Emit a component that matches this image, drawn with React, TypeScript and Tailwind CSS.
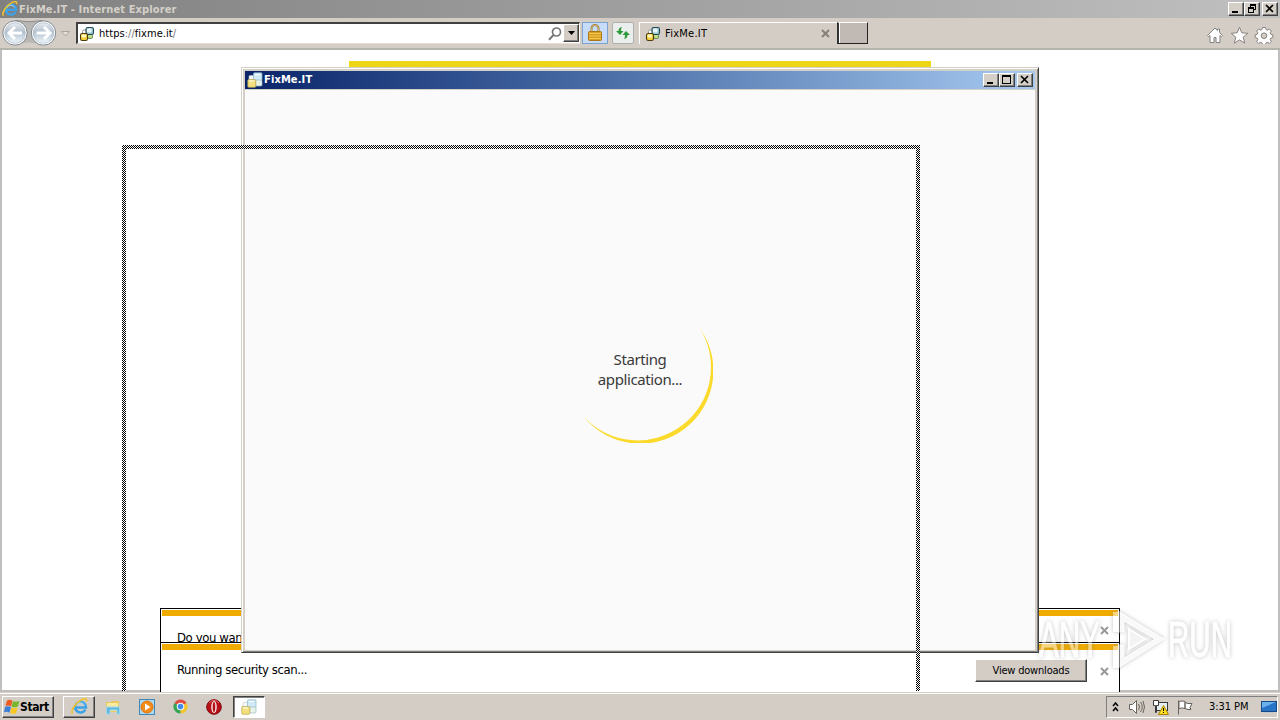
import type { ReactNode } from 'react';
import clsx from 'clsx';

type IconProps = { className?: string };

const raised =
  'border border-t-white border-l-white border-r-[#404040] border-b-[#404040] shadow-[inset_-1px_-1px_0_#808080]';

function IeIcon({ className }: IconProps) {
  return (
    <svg viewBox="0 0 16 16" className={className} fill="none">
      <path d="M13.600 11A5.200 5 0 1 1 14.200 8.900H5" stroke="#3ba3e8" strokeWidth="2.200" />
      <path d="M12.800 6.500A4.600 4.600 0 0 0 4.800 6.800" stroke="#a4defa" strokeWidth=".8" />
      <path d="M1.500 14.800C-.9 12.400 4.400 4.200 10.300 1.400c3.600-1.700 5-.5 4.200 1.900" stroke="#f0c22c" strokeWidth="1.500" />
    </svg>
  );
}

function FixMeIcon({ className }: IconProps) {
  return (
    <svg viewBox="0 0 16 16" className={className}>
      <rect x="3.500" y="4" width="5" height="5" rx="1.500" fill="#fff" stroke="#8f9896" />
      <rect x="8.500" y="8" width="5" height="4.500" rx="1.500" fill="#c4e08c" stroke="#6d8f5c" />
      <rect x="7" y="1.500" width="7.500" height="7" rx="1.800" fill="#9bc7d2" stroke="#1f4854" strokeWidth="1.100" />
      <rect x="8" y="2.500" width="4.500" height="4" rx="1" fill="#eaf6f7" />
      <rect x="1.500" y="7.500" width="7" height="7" rx="1.800" fill="#f5d13c" stroke="#4c3d10" strokeWidth="1.100" />
      <rect x="2.500" y="8.500" width="4.500" height="3" rx="1" fill="#fff6c0" />
    </svg>
  );
}

function FixMePaleIcon({ className }: IconProps) {
  return (
    <svg viewBox="0 0 16 16" className={className}>
      <rect x="2" y="3.500" width="6" height="5.500" rx="1" fill="#f7faf8" stroke="#b9c6c9" strokeWidth=".6" />
      <rect x="6.500" y=".8" width="8.500" height="8" rx="1" fill="#cfe9f6" stroke="#86b4c8" strokeWidth=".7" />
      <rect x="8.500" y="8" width="6.500" height="6" rx="1" fill="#e6f3ea" stroke="#96bac0" strokeWidth=".7" />
      <rect x=".8" y="7.500" width="8" height="7.800" rx="1" fill="#f3df7c" stroke="#b9a552" strokeWidth=".7" />
      <path d="M2 9h5M8 2.500h5" stroke="#fff" />
    </svg>
  );
}

function WindowsIcon({ className }: IconProps) {
  return (
    <svg viewBox="0 0 16 16" className={className}>
      <path d="M3 1.500c2-1.100 3.800-.8 5.400.2L7.200 7.300C5.500 6.200 3.500 6.200 1.500 7z" fill="#ed5a24" />
      <path d="M9 2c2 1 4.300.9 6.500-.2l-1.600 5.800c-1.900 1-4.200 1-6.200.1z" fill="#76b82a" />
      <path d="M1.200 7.800c2-1 4.200-.8 5.800.2l-1.500 5.700c-1.700-1.100-3.600-1.100-5.600-.3z" fill="#3b7fd6" />
      <path d="M7.600 8.500c2 1 4.100.9 6.100.1l-1.600 5.600c-1.800.9-4 .9-6-.1z" fill="#f9c922" />
    </svg>
  );
}

function CloseGlyph({ className }: IconProps) {
  return (
    <svg viewBox="0 0 9 9" className={clsx('h-[9px] w-[9px] shrink-0', className)} fill="none" stroke="currentColor" strokeWidth="2">
      <path d="M1 1l7 7M8 1L1 8" />
    </svg>
  );
}

function CaptionButton({ children }: { children: ReactNode }) {
  return (
    <div className={clsx('flex h-[14px] w-4 items-center justify-center bg-[#d4d0c8]', raised)}>
      <svg viewBox="0 0 12 10" className="h-[10px] w-3" fill="none" stroke="#000" shapeRendering="crispEdges">
        {children}
      </svg>
    </div>
  );
}

function CaptionButtons({ restored = false }: { restored?: boolean }) {
  return (
    <div className="flex">
      <CaptionButton>
        <path d="M2 8h6" strokeWidth="2" />
      </CaptionButton>
      <CaptionButton>
        {restored ? (
          <>
            <path d="M4.500 3V.500h5v5H8" />
            <path d="M4 1h6M2 4h6" strokeWidth="2" />
            <path d="M2.500 4v4.500h5V4" />
          </>
        ) : (
          <>
            <path d="M1.500 1v7.500h8V1" />
            <path d="M1 1h9" strokeWidth="2" />
          </>
        )}
      </CaptionButton>
      <div className="w-0.5" />
      <CaptionButton>
        <path d="M2 1l7 7M9 1L2 8" strokeWidth="1.700" shapeRendering="auto" />
      </CaptionButton>
    </div>
  );
}

function NavButtons() {
  return (
    <svg viewBox="0 0 74 30" className="h-[30px] w-[74px]">
      <defs>
        <linearGradient id="nav" x1="0" y1="0" x2="0" y2="1">
          <stop offset="0" stopColor="#e9edf2" />
          <stop offset=".45" stopColor="#b3c1d0" />
          <stop offset="1" stopColor="#edf7fc" />
        </linearGradient>
      </defs>
      <path d="M14 2.500Q29 5 44 2.500V27Q29 22 14 27z" fill="#b9b7b4" />
      <path d="M15 2.500Q29 5 43 2.500" stroke="#8b8b8b" fill="none" />
      {[15, 43.5].map((cx) => (
        <g key={cx}>
          <circle cx={cx} cy="15" r="12.200" fill="#fff" stroke="#7e8790" />
          <circle cx={cx} cy="15" r="10.300" fill="url(#nav)" stroke="#a8b5c2" strokeWidth=".7" />
        </g>
      ))}
      <g fill="none" stroke="#fff" strokeWidth="3">
        <path d="M22 15H9M15 9l-6 6 6 6M36.500 15h13M44 9l6 6-6 6" />
      </g>
      <path d="M61.500 13.500h8l-4 4.500z" fill="#e3dfd8" stroke="#aaa69f" />
    </svg>
  );
}

function ToolIcons() {
  return (
    <svg viewBox="0 0 68 18" className="h-[18px] w-[68px]" fill="#fff" stroke="#85827e" strokeWidth="1">
      <path d="M1.500 9.500L9 2l2.500 2.500V3h2v3.500l3 3-1 1-1.500-1v7h-4v-5H8v5H4v-7l-1.500 1z" />
      <path d="M33.500 1.200l2.300 5.600 6 .5-4.600 3.900 1.500 5.900-5.200-3.200-5.200 3.200 1.500-5.900-4.600-3.900 6-.5z" />
      <path d="M56.500 1.500h3l.5 2 1.500.6 1.800-1.100 2 2-1.100 1.800.6 1.500 2 .5v2.800l-2 .5-.6 1.500 1.100 1.800-2 2-1.800-1.100-1.500.6-.5 2h-3l-.5-2-1.500-.6-1.800 1.100-2-2 1.100-1.800-.6-1.500-2-.5V8.800l2-.5.6-1.500-1.100-1.800 2-2 1.800 1.100 1.500-.6z" />
      <circle cx="58" cy="9.700" r="2.800" fill="#d4cdc6" />
    </svg>
  );
}

function BrowserBar() {
  return (
    <div className="flex h-8 shrink-0 items-start border-b-2 border-[#b5b4ac] bg-[#d4cdc6]">
      <NavButtons />
      <div className="mt-[4px] ml-0.5 flex h-[22px] w-[504px] items-center border border-t-2 border-l-2 border-t-[#404040] border-l-[#404040] border-r-white border-b-[#e6ded5] bg-white pl-px">
        <FixMeIcon className="h-4 w-4" />
        <span className="mt-px ml-1 text-[11px] leading-4 tracking-[0.04px] whitespace-nowrap">
          https<span className="text-[#777]">://</span>fixme.it<span className="text-[#777]">/</span>
        </span>
        <svg viewBox="0 0 14 14" className="ml-auto h-[14px] w-[14px]" fill="none" stroke="#777">
          <circle cx="8.500" cy="5" r="4" strokeWidth="1.700" />
          <path d="M5.500 8L1 12.700" strokeWidth="2" />
        </svg>
        <div className={clsx('-mt-px ml-px flex h-[18px] w-4 items-center justify-center bg-[#d4cdc6]', raised)}>
          <svg viewBox="0 0 7 4" className="h-1 w-[7px]"><path d="M0 0h7L3.500 4z" /></svg>
        </div>
      </div>
      <div className="mt-[4px] ml-0.5 flex h-[22px] w-[26px] items-center justify-center border border-[#7da2ce] bg-[#c6dcf8]">
        <svg viewBox="0 0 14 18" className="h-[18px] w-[14px]">
          <path d="M3.500 8V4.500a3.500 3.500 0 0 1 7 0V8" fill="none" stroke="#9a7632" strokeWidth="2" />
          <path d="M3.500 8V4.500a3.500 3.500 0 0 1 7 0V8" fill="none" stroke="#ead18b" strokeWidth=".7" />
          <rect x=".5" y="7.500" width="13" height="9" rx="1" fill="#d99f24" stroke="#a87817" />
          <path d="M1 9.500h12M1 12h12M1 14.500h12" stroke="#f4c851" />
        </svg>
      </div>
      <div className="mt-[4px] ml-1 flex h-[22px] w-[22px] items-center justify-center rounded-[2px] border border-[#aeb0ae] bg-[#eaeeec]">
        <svg viewBox="0 0 16 16" className="h-4 w-4" fill="#2f9a39">
          <path d="M7 2C4.500 2.300 3.500 4 3.500 6H1l4 4 3.500-4H6c0-2 .3-3 1-4z" />
          <path d="M9 14c2.500-.3 3.500-2 3.500-4H15l-4-4-3.500 4H10c0 2-.3 3-1 4z" />
        </svg>
      </div>
      <div className="mt-[4px] ml-[5px] flex h-[22px] w-[198px] items-center border-t border-l border-white pr-[7px] pl-[5px]">
        <FixMeIcon className="h-4 w-4" />
        <span className="mt-px ml-1 text-[11px] leading-4 tracking-[0.25px]">FixMe.IT</span>
        <CloseGlyph className="ml-auto text-[#858078]" />
      </div>
      <div className="mt-[4px] h-[22px] w-[31px] border-t border-r border-b border-l-2 border-t-white border-r-[#222] border-b-[#222] border-l-[#333] bg-[#c1b9b4] shadow-[inset_1px_0_0_#fff]" />
      <div className="mt-[8px] mr-[6px] ml-auto">
        <ToolIcons />
      </div>
    </div>
  );
}

function Notification({ children, action, className }: { children: ReactNode; action?: ReactNode; className?: string }) {
  return (
    <div className={clsx('border border-b-0 border-black bg-white px-px pt-px', className)}>
      <div className="h-[6px] bg-[#f0ab00]" />
      <div className="flex items-start">
        {children}
        {action}
      </div>
    </div>
  );
}

function Checker({ className }: IconProps) {
  return (
    <div className={clsx('bg-[repeating-conic-gradient(#000_0_25%,#fff_0_50%)] bg-[length:2px_2px]', className)} />
  );
}

// Outline drawn by the system while a window is being moved
function DragOutline() {
  return (
    <div className="absolute top-[145px] left-[122px] flex h-[546px] w-[798px] flex-col">
      <Checker className="h-1 shrink-0" />
      <div className="flex flex-1 justify-between">
        <Checker className="w-1" />
        <Checker className="w-1" />
      </div>
    </div>
  );
}

function AppWindow() {
  return (
    <div className="absolute top-[67px] left-[241px] flex h-[586px] w-[798px] flex-col border border-t-[#d4d0c8] border-r-[#404040] border-b-[#404040] border-l-[#d4d0c8] bg-[#d4d0c8] p-[3px] pb-[2px] shadow-[inset_1px_1px_0_#fff,inset_-1px_-1px_0_#808080]">
      <div className="flex h-[18px] shrink-0 items-center bg-linear-to-r from-[#0a246a] to-[#a6caf0] pr-0.5 pl-0.5 text-white">
        <FixMePaleIcon className="h-4 w-4" />
        <span className="ml-px text-[11px] leading-4 font-bold tracking-[0.12px]">FixMe.IT</span>
        <div className="ml-auto">
          <CaptionButtons />
        </div>
      </div>
      <div className="mt-px flex flex-1 items-center justify-center bg-[#fafafa]">
        <div className="relative flex h-[146px] w-[146px] items-center justify-center">
          <svg viewBox="0 0 146 146" className="absolute inset-0 h-full w-full">
            <path
              d="M133 31.500A73 73 0 0 1 17 120A73.300 73.300 0 0 0 133 31.500Z"
              fill="#fbda2b"
            />
          </svg>
          <p className="relative -top-px text-center font-['Noto_Sans',sans-serif] text-[15px] leading-5 tracking-[-0.4px] text-[#393939]">
            Starting
            <br />
            application...
          </p>
        </div>
      </div>
    </div>
  );
}

function Watermark() {
  return (
    <svg
      viewBox="0 0 220 66"
      className="absolute top-[606px] left-[1036px] h-[66px] w-[220px] overflow-visible font-['Liberation_Sans_Narrow','Liberation_Sans',sans-serif] opacity-50 drop-shadow-[0_0_2px_#888]"
      fill="#fff"
      stroke="#fff"
      fontSize="50"
    >
      <text x="3" y="51" textLength="61" lengthAdjust="spacingAndGlyphs">ANY</text>
      <text x="132" y="51" textLength="64" lengthAdjust="spacingAndGlyphs">RUN</text>
      <path d="M77 6h5v20h-5zM77 40h5v22h-5z" stroke="none" />
      <path d="M82 5l46 28-46 29V39h6v13l31-19-31-18v11h-6z" fill="#f4f4f4" strokeWidth="1" />
      <path d="M93 23l16 10-16 10z" fill="#e8e8e8" strokeWidth="2" />
    </svg>
  );
}

function TaskButton({ children }: { children: ReactNode }) {
  return <div className="flex w-[33.800px] justify-center">{children}</div>;
}

function Taskbar() {
  return (
    <div className="flex h-7 shrink-0 items-center bg-[#d4cdc6] pt-px pr-0.5 pl-0.5 shadow-[inset_0_1px_0_#d4d0c8,inset_0_2px_0_#fff]">
      <div className={clsx('flex h-[22px] w-[52px] items-center pl-px', raised)}>
        <WindowsIcon className="h-4 w-4" />
        <span className="text-[12px] leading-4 font-bold tracking-[-0.4px]">Start</span>
      </div>
      <div className={clsx('ml-[9px] flex h-[22px] w-8 items-center justify-center', raised)}>
        <IeIcon className="h-[17px] w-[17px]" />
      </div>
      <div className="ml-px flex">
        <TaskButton>
          <svg viewBox="0 0 16 16" className="h-4 w-4">
            <path d="M1 3h5l1-1h7v11H1z" fill="#e8c95c" />
            <path d="M2 4h11v8H2z" fill="#f9eaa1" />
            <path d="M1.500 8h13v7H12v-4H5v4H1.500z" fill="#65b8dd" stroke="#9ad8ed" />
          </svg>
        </TaskButton>
        <TaskButton>
          <svg viewBox="0 0 16 16" className="h-4 w-4">
            <rect x=".5" y=".5" width="15" height="15" fill="#add9f3" stroke="#3f86b9" />
            <circle cx="8" cy="8" r="6" fill="#f18b16" stroke="#df750b" />
            <path d="M6 4.500v7L11.500 8z" fill="#fff" />
          </svg>
        </TaskButton>
        <TaskButton>
          <svg viewBox="0 0 16 16" className="h-[15px] w-[15px]">
            <path d="M8 8L1.500 4.200A7.500 7.500 0 0 1 14.500 4.200z" fill="#df4b3f" />
            <path d="M8 8L14.500 4.200A7.500 7.500 0 0 1 8 15.500z" fill="#f4c52d" />
            <path d="M8 8v7.500A7.500 7.500 0 0 1 1.500 4.200z" fill="#36a455" />
            <circle cx="8" cy="8" r="4" fill="#fff" />
            <circle cx="8" cy="8" r="3" fill="#438bea" />
          </svg>
        </TaskButton>
        <TaskButton>
          <svg viewBox="0 0 16 16" className="h-4 w-4">
            <circle cx="8" cy="8" r="7.300" fill="#b81018" stroke="#7e080d" />
            <path d="M3 4Q8-1 13 4" stroke="#e7696c" fill="none" />
            <ellipse cx="8" cy="8" rx="2.800" ry="6" fill="#f0e8e6" />
            <ellipse cx="8" cy="8" rx="1.300" ry="5" fill="#b81018" />
          </svg>
        </TaskButton>
      </div>
      <div className="ml-0.5 flex h-[22px] w-8 items-center justify-center border border-t-[#404040] border-r-white border-b-white border-l-[#404040] bg-white shadow-[inset_1px_1px_0_#808080]">
        <FixMePaleIcon className="h-4 w-4" />
      </div>

      <div className="ml-auto flex h-[22px] w-[172px] items-center border border-t-[#808080] border-r-white border-b-white border-l-[#808080] pl-[5px]">
        <svg viewBox="0 0 7 10" className="h-[10px] w-[7px]" fill="none" stroke="#000" strokeWidth="1.500">
          <path d="M1 4l2.500-3L6 4M1 9l2.500-3L6 9" />
        </svg>
        <svg viewBox="0 0 66 18" className="ml-[9px] h-[18px] w-[66px]" fill="#fff" stroke="#69645e">
          <path d="M1.500 6.500h3l4-4v13l-4-4h-3z" />
          <path d="M10.500 6q2 3 0 6M12.500 4q3.500 5 0 10M15 3q3 6 0 12" fill="none" />
          <rect x="28.500" y="4.500" width="11" height="8" fill="#e7eef0" stroke="#393939" />
          <path d="M25.500 2.500h5v5h-2v7h-1v-7h-2z" stroke="#393939" />
          <path d="M35.500 7.500l5 9h-10z" fill="#ffdf20" stroke="#a78300" />
          <path d="M35.500 10v3m0 1v1" stroke="#000" />
          <path d="M50.500 2.500v14M51 3.500q3-1 6 0v7q-3-1-6 0zM57 4.500l3 1h4l-2 4 1 2h-3l-3-1z" />
        </svg>
        <span className="mt-px ml-[15px] w-[39px] text-[11px] leading-4 tracking-[-0.05px] whitespace-nowrap">3:31 PM</span>
        <svg viewBox="0 0 16 16" className="ml-auto h-4 w-4">
          <rect x=".5" y="2.500" width="15" height="10" fill="#2875c8" stroke="#174986" />
          <path d="M1 3h14L1 9z" fill="#6bb1eb" />
          <path d="M4 13.500h8" stroke="#b9c8d1" />
        </svg>
      </div>
    </div>
  );
}

export default function App() {
  return (
    <div className="relative flex h-[720px] w-[1280px] flex-col overflow-hidden bg-white font-['DejaVu_Sans_Condensed','DejaVu_Sans',sans-serif] text-black">
      <div className="flex h-[18px] shrink-0 items-center bg-linear-to-r from-[#808080] to-[#c0c0c0] pr-0.5 pl-0.5">
        <IeIcon className="h-4 w-4" />
        <span className="mt-px ml-px text-[11px] leading-4 font-bold tracking-[0.12px] text-[#d4d0c8]">FixMe.IT - Internet Explorer</span>
        <div className="ml-auto">
          <CaptionButtons restored />
        </div>
      </div>
      <BrowserBar />
      <main className="flex flex-1 flex-col border-r-2 border-b-2 border-l-2 border-[#c0bfbd] pt-[11px]">
        <div className="mx-auto h-[6px] w-[582px] bg-[#edd518]" />
        <div className="mx-auto mt-auto -mb-0.5 w-[960px]">
          <Notification
            className="h-[34px]"
            action={<CloseGlyph className="mt-[10px] mr-[9px] ml-auto text-[#999]" />}
          >
            <span className="mt-[14px] ml-[15px] text-[13px] leading-4 tracking-[-0.4px] whitespace-nowrap">Do you want</span>
          </Notification>
          <Notification
            className="relative h-[50px] border-b"
            action={
              <>
                <div className={clsx('mt-[9px] ml-auto flex h-[23px] w-[112px] items-center justify-center bg-[#d4cdc6] text-[11px] tracking-[-0.2px]', raised)}>
                  <span className="mt-px">View downloads</span>
                </div>
                <CloseGlyph className="mt-[17px] mr-[9px] ml-[13px] text-[#999]" />
              </>
            }
          >
            <span className="mt-[12px] ml-[15px] text-[13px] leading-4 tracking-[-0.42px] whitespace-nowrap">Running security scan...</span>
          </Notification>
        </div>
      </main>
      <Taskbar />
      <AppWindow />
      <Watermark />
      <DragOutline />
    </div>
  );
}
